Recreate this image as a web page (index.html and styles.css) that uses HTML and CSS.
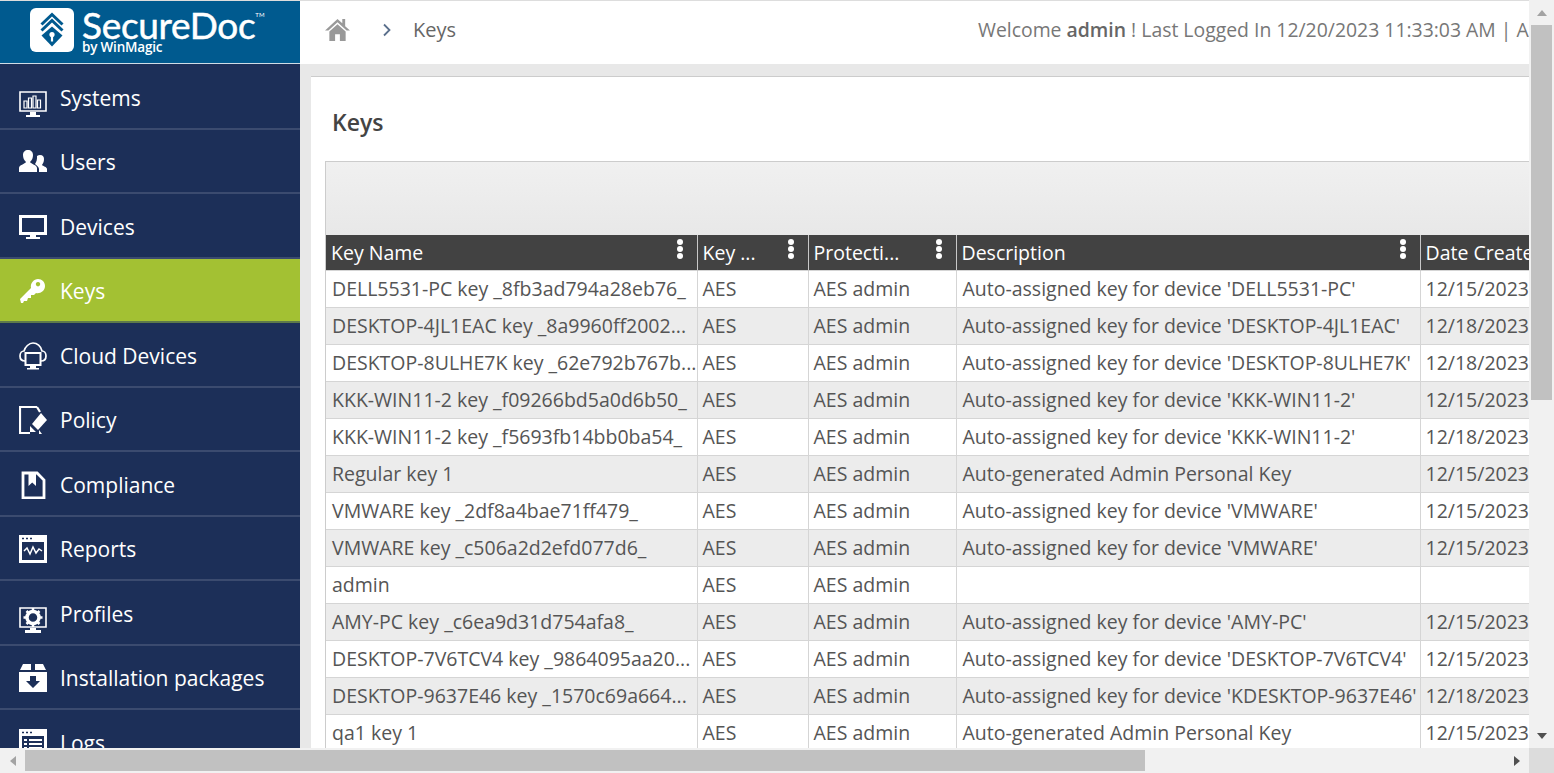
FILE: index.html
```html
<!DOCTYPE html>
<html lang="en">
<head>
    <meta charset="UTF-8">
    <meta name="viewport" content="width=device-width, initial-scale=1.0">
    <title>SecureDoc - Keys</title>
    <link rel="stylesheet" href="styles.css">
</head>
<body>
    <div class="window">
        <div class="page">
            <aside class="sidebar">
                <div class="logo">
                    <svg class="logo-mark" viewBox="0 0 44 44">
                        <rect width="44" height="44" rx="6" fill="#fff"/>
                        <path d="M11.5 16.5L22 6.5L32.5 16.5M11.5 22.5L22 12.5L32.5 22.5" fill="none" stroke="#005a8f" stroke-width="3"/>
                        <path d="M11.5 27.5L22 18.5L32.5 27.5L22 38.5Z" fill="#005a8f"/>
                        <circle cx="22" cy="26.5" r="2.6" fill="#fff"/>
                        <rect x="20.9" y="27" width="2.2" height="6.5" fill="#fff"/>
                    </svg>
                    <div class="logo-text">
                        <div class="logo-name">SecureDoc<span class="logo-tm">TM</span></div>
                        <div class="logo-by">by WinMagic</div>
                    </div>
                </div>
                <ul class="menu">
                    <li><a href="#">
                        <svg class="icon icon-low" viewBox="0 0 28 28"><path d="M1 1H27V20H1Z" fill="none" stroke="#fff" stroke-width="1.6"/><path d="M5 10h3v7H5zM9.5 7h3v10h-3zM14 5h3v12h-3zM18.5 9h3v8h-3z" fill="none" stroke="#fff" stroke-width="1.2"/><path d="M11 21h6v3h4v2H7v-2h4z" fill="#fff"/></svg>
                        <span>Systems</span></a></li>
                    <li><a href="#">
                        <svg class="icon" viewBox="0 0 28 28"><path d="M0 24v-4c0-3 6-4 7-6-2-2-3-4-3-7 0-3 2-5 5-5s5 2 5 5c0 3-1 5-3 7 1 2 7 3 7 6v4z" fill="#fff"/><path d="M20 24h8v-3c0-2-4-3-5-4 1-2 2-3 2-6 0-2-1-4-4-4-1 0-2 .4-3 1 .3 3-.5 6-2 8 2 2 4 3 4 5z" fill="#fff"/></svg>
                        <span>Users</span></a></li>
                    <li><a href="#">
                        <svg class="icon" viewBox="0 0 28 28"><path d="M0 2H28V22H0ZM3 5V19H25V5Z" fill="#fff" fill-rule="evenodd"/><path d="M11 22h6v2h4v2H7v-2h4z" fill="#fff"/></svg>
                        <span>Devices</span></a></li>
                    <li class="active"><a href="#">
                        <svg class="icon" viewBox="0 0 28 28"><path d="M2 26l-1-4L12 11c-1-5 3-9 7-9 4 0 7 3 7 7 0 5-5 8-9 7l-2 2h-3v3h-3l-1 3h-3l-1 2zM19 5a2.200 2.200 0 1 0 .01 0z" fill="#fff" fill-rule="evenodd"/></svg>
                        <span>Keys</span></a></li>
                    <li><a href="#">
                        <svg class="icon" viewBox="0 0 28 28"><path d="M6 19C2 19 1 16 1 14c0-3 2-5 4-5 1-4 5-8 9-8s8 3 9 8c2 0 4 2 4 5 0 2-1 5-5 5" fill="none" stroke="#fff" stroke-width="1.7"/><path d="M6.500 11H21.500V23H6.500Z" fill="none" stroke="#fff" stroke-width="2" /><path d="M11 24h6v2h3v1.500H8V26h3z" fill="#fff"/></svg>
                        <span>Cloud Devices</span></a></li>
                    <li><a href="#">
                        <svg class="icon" viewBox="0 0 28 28"><path d="M18 1H1V27H11M18 1L21 6" fill="none" stroke="#fff" stroke-width="2.2"/><path d="M22 7L28 14L19 24L13 18Z" fill="#fff"/><path d="M11 20L17 26H11ZM20 24V28H23" fill="#fff"/></svg>
                        <span>Policy</span></a></li>
                    <li><a href="#">
                        <svg class="icon" viewBox="0 0 28 28"><path d="M4 2H18L25 9V27H4Z" fill="none" stroke="#fff" stroke-width="2.800"/><path d="M9.500 2H17V15L13.200 11.500L9.500 15Z" fill="#fff"/></svg>
                        <span>Compliance</span></a></li>
                    <li><a href="#">
                        <svg class="icon" viewBox="0 0 28 28"><path d="M0 0H28V28H0ZM3 7V25H25V7Z" fill="#fff" fill-rule="evenodd"/><path d="M3 1.500h2M7 1.500h2M11 1.500h2" stroke="#1c2f58" stroke-width="1.600" transform="translate(0 2)"/><path d="M5 16L8 13L11 19L14 12L17 18L20 14L23 16" fill="none" stroke="#fff" stroke-width="1.500"/></svg>
                        <span>Reports</span></a></li>
                    <li><a href="#">
                        <svg class="icon icon-low" viewBox="0 0 28 28"><path d="M1 1H27V20H1Z" fill="none" stroke="#fff" stroke-width="1.600"/><circle cx="14" cy="10.500" r="6" fill="none" stroke="#fff" stroke-width="3.500"/><path d="M14 1v3M14 17v3M4.500 10.500h3M20.500 10.500h3M7.500 4l2 2M18.500 15l2 2M20.500 4l-2 2M9.500 15l-2 2" stroke="#fff" stroke-width="2.500"/><path d="M11 21h6v2h5v3H6v-3h5z" fill="#fff"/></svg>
                        <span>Profiles</span></a></li>
                    <li><a href="#">
                        <svg class="icon" viewBox="0 0 28 28"><path d="M4 0H12V6H1ZM16 0H24L27 6H16ZM0 8H28V28H0Z" fill="#fff"/><path d="M11 12h6v5h4l-7 7-7-7h4z" fill="#1c2f58"/></svg>
                        <span>Installation packages</span></a></li>
                    <li><a href="#">
                        <svg class="icon" viewBox="0 0 28 28"><path d="M0 0H28V28H0ZM3 7V25H25V7Z" fill="#fff" fill-rule="evenodd"/><path d="M3 1.500h2M7 1.500h2M11 1.500h2" stroke="#1c2f58" stroke-width="1.600" transform="translate(0 2)"/><path d="M5 11h3M10 11h13M5 15h3M10 15h13M5 19h3M10 19h13" stroke="#fff" stroke-width="1.800"/></svg>
                        <span>Logs</span></a></li>
                </ul>
            </aside>
            <div class="content">
                <header class="topbar">
                    <div class="crumbs">
                        <svg class="home" viewBox="0 0 26 24"><path d="M13 1L0 13h3.500L13 4.500 22.500 13H26L21 8.500V1h-3v4.500z" fill="#999"/><path d="M4.500 14L13 6.500 21.500 14V24H15.500V17h-5v7H4.500z" fill="#999"/></svg>
                        <svg class="chevron" viewBox="0 0 8 14"><path d="M1 1.500L6.500 7L1 12.500" fill="none" stroke="#5a6f8c" stroke-width="1.800"/></svg>
                        <span class="crumb">Keys</span>
                    </div>
                    <div class="welcome">Welcome <b>admin</b> ! Last Logged In 12/20/2023 11:33:03 AM | A</div>
                </header>
                <main class="panel">
                    <h2>Keys</h2>
                    <div class="grid">
                        <div class="toolbar"></div>
                        <table>
                            <colgroup>
                                <col class="col-name">
                                <col class="col-type">
                                <col class="col-prot">
                                <col class="col-desc">
                                <col class="col-date">
                            </colgroup>
                            <thead>
                                <tr>
                                    <th><div class="th-in"><span>Key Name</span><i class="dots"></i></div></th>
                                    <th><div class="th-in"><span>Key ...</span><i class="dots"></i></div></th>
                                    <th><div class="th-in"><span>Protecti...</span><i class="dots"></i></div></th>
                                    <th><div class="th-in"><span>Description</span><i class="dots"></i></div></th>
                                    <th><div class="th-in"><span>Date Create</span></div></th>
                                </tr>
                            </thead>
                            <tbody>
                                <tr><td>DELL5531-PC key _8fb3ad794a28eb76_</td><td>AES</td><td>AES admin</td><td>Auto-assigned key for device 'DELL5531-PC'</td><td>12/15/2023</td></tr>
                                <tr><td>DESKTOP-4JL1EAC key _8a9960ff2002...</td><td>AES</td><td>AES admin</td><td>Auto-assigned key for device 'DESKTOP-4JL1EAC'</td><td>12/18/2023</td></tr>
                                <tr><td>DESKTOP-8ULHE7K key _62e792b767b...</td><td>AES</td><td>AES admin</td><td>Auto-assigned key for device 'DESKTOP-8ULHE7K'</td><td>12/18/2023</td></tr>
                                <tr><td>KKK-WIN11-2 key _f09266bd5a0d6b50_</td><td>AES</td><td>AES admin</td><td>Auto-assigned key for device 'KKK-WIN11-2'</td><td>12/15/2023</td></tr>
                                <tr><td>KKK-WIN11-2 key _f5693fb14bb0ba54_</td><td>AES</td><td>AES admin</td><td>Auto-assigned key for device 'KKK-WIN11-2'</td><td>12/18/2023</td></tr>
                                <tr><td>Regular key 1</td><td>AES</td><td>AES admin</td><td>Auto-generated Admin Personal Key</td><td>12/15/2023</td></tr>
                                <tr><td>VMWARE key _2df8a4bae71ff479_</td><td>AES</td><td>AES admin</td><td>Auto-assigned key for device 'VMWARE'</td><td>12/15/2023</td></tr>
                                <tr><td>VMWARE key _c506a2d2efd077d6_</td><td>AES</td><td>AES admin</td><td>Auto-assigned key for device 'VMWARE'</td><td>12/15/2023</td></tr>
                                <tr><td>admin</td><td>AES</td><td>AES admin</td><td></td><td></td></tr>
                                <tr><td>AMY-PC key _c6ea9d31d754afa8_</td><td>AES</td><td>AES admin</td><td>Auto-assigned key for device 'AMY-PC'</td><td>12/15/2023</td></tr>
                                <tr><td>DESKTOP-7V6TCV4 key _9864095aa20...</td><td>AES</td><td>AES admin</td><td>Auto-assigned key for device 'DESKTOP-7V6TCV4'</td><td>12/15/2023</td></tr>
                                <tr><td>DESKTOP-9637E46 key _1570c69a664...</td><td>AES</td><td>AES admin</td><td>Auto-assigned key for device 'KDESKTOP-9637E46'</td><td>12/18/2023</td></tr>
                                <tr><td>qa1 key 1</td><td>AES</td><td>AES admin</td><td>Auto-generated Admin Personal Key</td><td>12/15/2023</td></tr>
                            </tbody>
                        </table>
                    </div>
                </main>
            </div>
        </div>
        <div class="vbar">
            <span class="arrow arrow-up"></span>
            <div class="vtrack"><div class="vthumb"></div></div>
            <span class="arrow arrow-down"></span>
        </div>
        <div class="hbar">
            <span class="arrow arrow-left"></span>
            <div class="htrack"><div class="hthumb"></div></div>
            <span class="arrow arrow-right"></span>
        </div>
        <div class="corner"></div>
    </div>
</body>
</html>
```

FILE: styles.css
```css
* {
    box-sizing: border-box;
}

html, body {
    margin: 0;
    padding: 0;
    height: 100%;
    overflow: hidden;
}

body {
    font-family: "Open Sans", "Liberation Sans", sans-serif;
    background: #fff;
    color: #555;
}

.window {
    display: grid;
    grid-template-columns: 1529px 25px;
    grid-template-rows: 748px 25px;
    width: 1554px;
    height: 773px;
}

.page {
    display: flex;
    overflow: hidden;
    border-top: 1px solid #ddd;
}

/* sidebar */
.sidebar {
    flex: 0 0 300px;
    background: #1c2f58;
    overflow: hidden;
}

.logo {
    display: flex;
    align-items: center;
    height: 63px;
    padding: 0 0 5px 30px;
    gap: 8px;
    background: #005a8f;
    border-bottom: 1px solid #cfdce6;
}

.logo-mark {
    width: 44px;
    height: 44px;
    flex: none;
}

.logo-text {
    color: #fff;
    margin-top: 2px;
}

.logo-name {
    position: relative;
    font-family: "Lato", "Open Sans", sans-serif;
    font-size: 37px;
    line-height: 33px;
    letter-spacing: -0.3px;
    -webkit-text-stroke: 0.5px #fff;
}

.logo-tm {
    position: absolute;
    top: 3px;
    left: 100%;
    font-size: 6px;
    line-height: 8px;
    letter-spacing: 0;
    -webkit-text-stroke: 0;
}

.logo-by {
    font-size: 13.5px;
    line-height: 13px;
    font-weight: 600;
    letter-spacing: -0.2px;
}

.menu {
    list-style: none;
    margin: 1px 0 0;
    padding: 0;
}

.menu li {
    height: 64.5px;
    border-bottom: 2px solid #3b4b6f;
}

.menu li a {
    display: flex;
    align-items: center;
    height: 100%;
    padding: 3px 0 0 19px;
    gap: 13px;
    color: #fff;
    font-size: 21px;
    text-decoration: none;
}

.menu li.active {
    background: #a3c133;
    border-bottom-color: #5e7a4a;
}

.icon {
    width: 28px;
    height: 28px;
    flex: none;
}

.icon-low {
    margin-top: 14px;
}

/* right side */
.content {
    flex: 1;
    min-width: 0;
    display: flex;
    flex-direction: column;
    background: linear-gradient(#dcdcdc, #e8e8e8 12px);
}

.topbar {
    display: flex;
    align-items: center;
    flex: 0 0 63px;
    padding-bottom: 6px;
    background: #fff;
    white-space: nowrap;
}

.crumbs {
    flex: 0 0 678px;
    display: flex;
    align-items: center;
    padding-left: 25px;
}

.home {
    width: 25px;
    height: 23px;
}

.chevron {
    width: 8px;
    height: 14px;
    margin-left: 33px;
}

.crumb {
    margin-left: 22px;
    font-size: 20px;
    color: #666;
}

.welcome {
    flex: none;
    font-size: 19.4px;
    color: #777;
}

.welcome b {
    font-weight: 600;
    color: #666;
}

.panel {
    flex: 1;
    margin: 12px 0 0 11px;
    padding: 0 0 0 14px;
    background: #fff;
    border-top: 1px solid #ccc;
    overflow: hidden;
}

.panel h2 {
    margin: 0;
    padding: 29px 0 0 7px;
    height: 84px;
    font-size: 23px;
    line-height: 32px;
    font-weight: 600;
    color: #444;
}

/* grid */
.grid {
    width: 1400px;
    border-left: 1px solid #ccc;
}

.toolbar {
    height: 74px;
    border-top: 1px solid #ccc;
    background: linear-gradient(#f0f0f0, #e8e8e8);
}

table {
    table-layout: fixed;
    border-collapse: collapse;
    width: 1303px;
    font-size: 19.5px;
}

.col-name { width: 371px; }
.col-type { width: 111px; }
.col-prot { width: 148px; }
.col-desc { width: 464px; }
.col-date { width: 209px; }

th {
    height: 35px;
    padding: 0 5px;
    background: #424242;
    color: #fff;
    font-weight: 400;
    text-align: left;
    border-right: 1px solid #c8c8c8;
    white-space: nowrap;
    overflow: hidden;
}

.th-in {
    display: flex;
    align-items: center;
    justify-content: space-between;
    padding-right: 9px;
}

.dots {
    flex: none;
    width: 6px;
    height: 6px;
    margin-top: -10px;
    margin-bottom: 10px;
    border-radius: 50%;
    background: #fff;
    box-shadow: 0 7px 0 #fff, 0 14px 0 #fff;
}

td {
    height: 37px;
    padding: 0 5px;
    border: 1px solid #d5d5d5;
    border-left: 0;
    white-space: nowrap;
    overflow: hidden;
    color: #555;
}

td:first-child, td:nth-child(4) {
    padding-left: 6px;
}

tbody tr:nth-child(even) td {
    background: #ececec;
}

/* scrollbars */
.vbar {
    display: flex;
    flex-direction: column;
    align-items: center;
    background: #f1f1f1;
}

.vtrack {
    flex: 1;
    width: 100%;
    padding: 0 2px;
}

.vthumb {
    height: 375px;
    background: #c1c1c1;
}

.hbar {
    display: flex;
    align-items: center;
    background: #f1f1f1;
}

.htrack {
    flex: 1;
    height: 100%;
    padding: 2px 0;
}

.hthumb {
    width: 1120px;
    height: 100%;
    background: #c1c1c1;
}

.corner {
    background: #dcdcdc;
}

.arrow {
    flex: none;
    display: flex;
    align-items: center;
    justify-content: center;
    width: 25px;
    height: 25px;
}

.arrow::before {
    content: "";
    border: 5.500px solid transparent;
}

.arrow-up::before {
    border-top: 0;
    border-bottom: 6px solid #a3a3a3;
}

.arrow-down::before {
    border-bottom: 0;
    border-top: 6px solid #505050;
}

.arrow-left::before {
    border-left: 0;
    border-right: 6px solid #a3a3a3;
}

.arrow-right::before {
    border-right: 0;
    border-left: 6px solid #505050;
}
```
